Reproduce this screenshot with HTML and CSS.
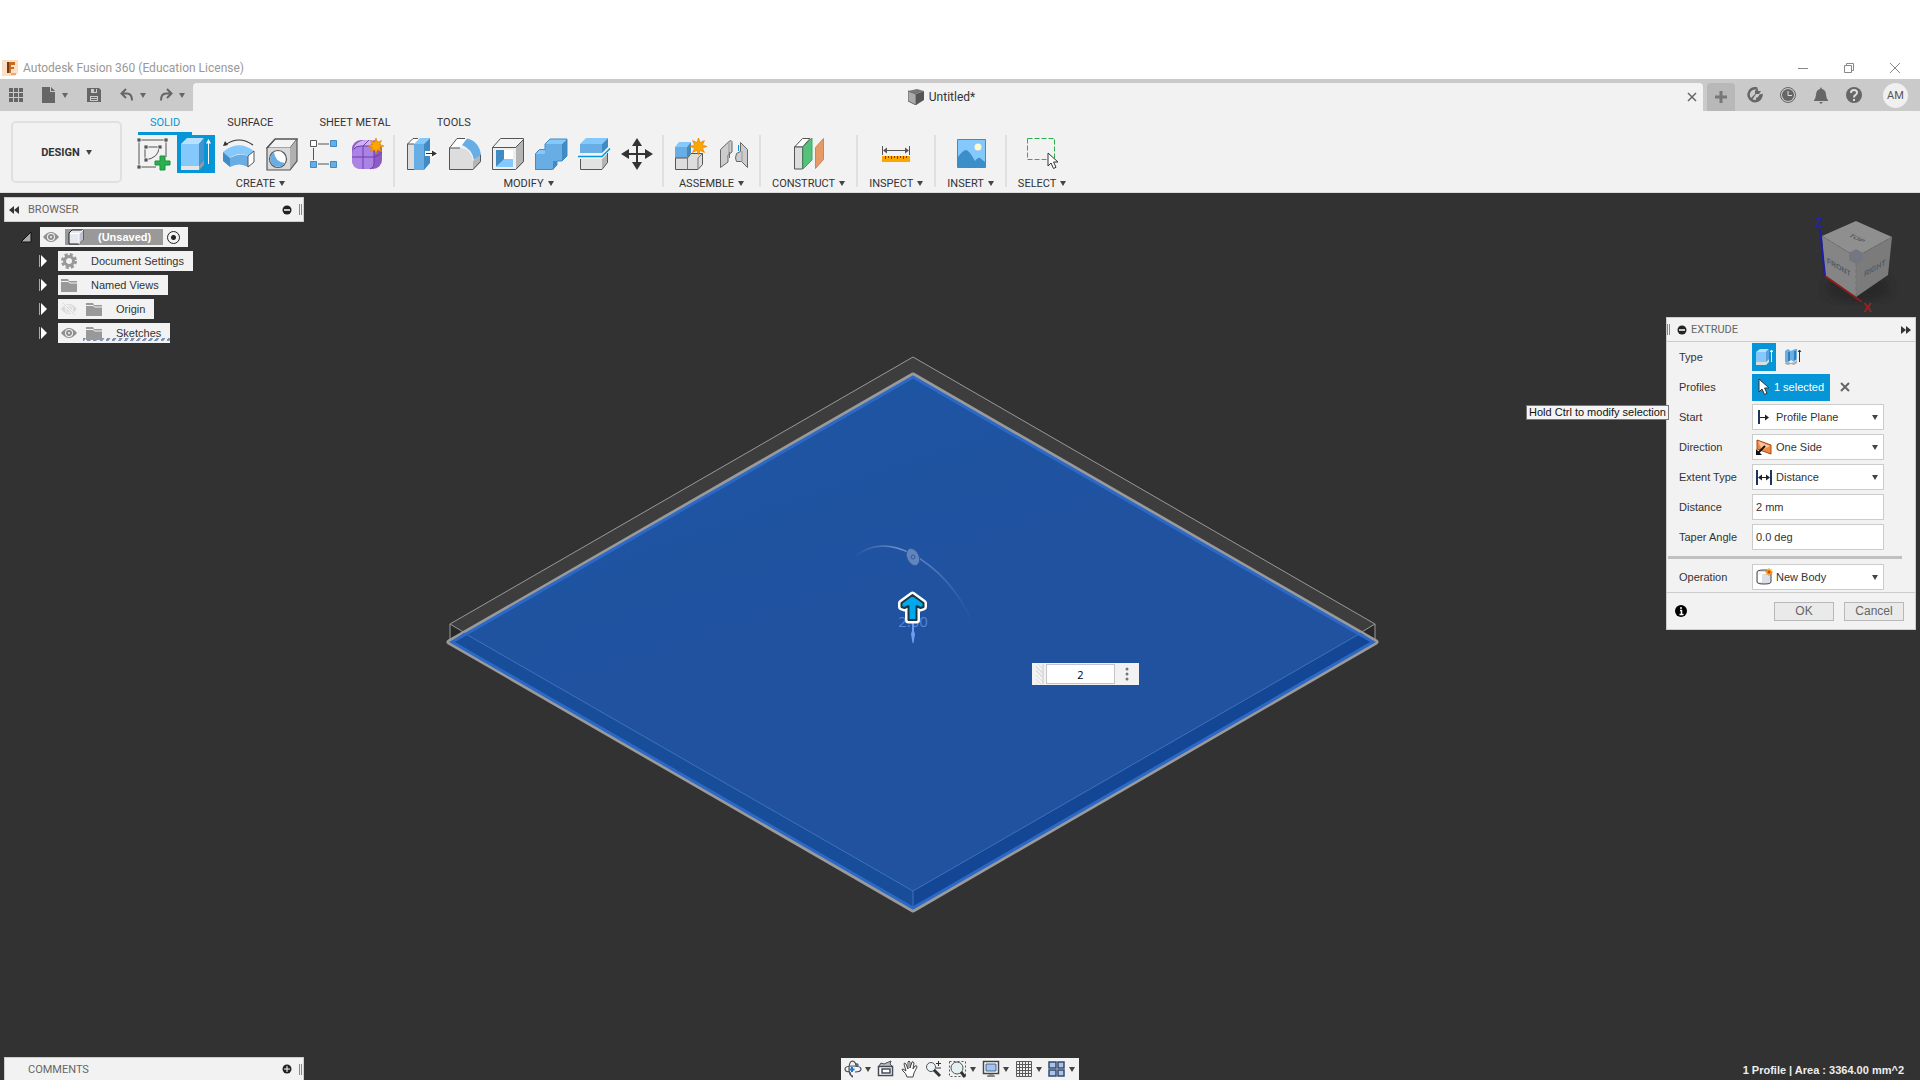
FILE: index.html
```html
<!DOCTYPE html>
<html lang="en">
  <head>
    <meta charset="UTF-8" />
    <meta name="viewport" content="width=device-width, initial-scale=1.0" />
    <title>Autodesk Fusion 360 (Education License)</title>
    <link rel="stylesheet" href="styles.css">
  </head>
  <body>
    <svg class="defs" aria-hidden="true">
      <symbol id="eye" viewBox="0 0 16 16">
        <path d="M0 8 Q4 3 8 3 T16 8 Q12 13 8 13 T0 8Z" fill="#8f8f8f"/>
        <circle cx="8" cy="8" r="4" fill="#f2f2f2"/><circle cx="8" cy="8" r="3" fill="#8f8f8f"/><circle cx="8" cy="8" r="1" fill="#f2f2f2"/>
      </symbol>
      <symbol id="folder" viewBox="0 0 16 16">
        <path d="M0 2h7l1 2h8v11H0z" fill="#999"/><path d="M0 4.500h7l2 1.500h7" fill="none" stroke="#f2f2f2"/>
      </symbol>
      <symbol id="star" viewBox="0 0 16 16">
        <path d="M8 0l1.500 4.300L13.600 2.400 11.700 6.500 16 8l-4.300 1.500 1.900 4.100-4.100-1.900L8 16l-1.500-4.300-4.100 1.900 1.900-4.100L0 8l4.300-1.500L2.400 2.400l4.100 1.900z" fill="#ffa500" stroke="#d98200" stroke-width=".6"/>
      </symbol>
      <symbol id="pointer" viewBox="0 0 12 18">
        <path d="M1 1v13l3-3 2.500 5.500 2.500-1.200L6.600 10H11z" fill="#fff" stroke="#333"/>
      </symbol>
    </svg>

    <header class="title-bar">
      <svg class="logo" width="16" height="16" viewBox="0 0 16 16">
        <path d="M0 0h16v13l-3 3H0z" fill="#fbe0c8"/><path d="M5 2h8v3H9v2h3v2H9v4H5z" fill="#c96a1c"/><path d="M5 2h2v11H5z" fill="#7a3a10"/><path d="M9 13h5v2H9z" fill="#f0a868"/>
      </svg>
      <h1 class="app-name">Autodesk Fusion 360 (Education License)</h1>
      <div class="window-buttons">
        <button aria-label="Minimize"><svg width="12" height="12"><path d="M1 6.500h10" stroke="#888" /></svg></button>
        <button aria-label="Restore"><svg width="12" height="12"><path d="M1.500 3.500h7v7h-7zM3.500 3.500v-2h7v7h-2" fill="none" stroke="#888"/></svg></button>
        <button aria-label="Close"><svg width="12" height="12"><path d="M1 1l10 10M11 1L1 11" stroke="#888"/></svg></button>
      </div>
    </header>

    <div class="document-bar">
      <div class="quick-access">
        <button aria-label="Data panel"><svg width="14" height="14" fill="#666"><path d="M0 0h4v4H0zM5 0h4v4H5zM10 0h4v4h-4zM0 5h4v4H0zM5 5h4v4H5zM10 5h4v4h-4zM0 10h4v4H0zM5 10h4v4H5zM10 10h4v4h-4z"/></svg></button>
        <button class="file" aria-label="File"><svg width="14" height="16" fill="#666"><path d="M0 0h8v5h5v11H0z"/><path d="M9 0l4 4H9z"/></svg><i class="caret"></i></button>
        <button class="save" aria-label="Save"><svg width="14" height="14"><path d="M0 0h12l2 2v12H0z" fill="#666"/><path d="M4 1h6v4H4zM3 8h8v5H3z" fill="#ccc"/><path d="M7 1h2v3H7zM4 9h6v1H4zM4 11h6v1H4z" fill="#666"/></svg></button>
        <button class="undo" aria-label="Undo"><svg width="14" height="14" fill="none" stroke="#666" stroke-width="2"><path d="M6 1L1.500 5.500 6 10M2 5.500h5q5 0 5 7"/></svg><i class="caret"></i></button>
        <button class="redo" aria-label="Redo"><svg width="14" height="14" fill="none" stroke="#666" stroke-width="2"><path d="M8 1l4.500 4.500L8 10M12 5.500H7q-5 0-5 7"/></svg><i class="caret"></i></button>
      </div>
      <div class="document-tab">
        <svg width="16" height="16"><path d="M0 2l9-2 7 2-8 3z" fill="#777"/><path d="M0 2l8 3v11l-8-4z" fill="#aaa" stroke="#666"/><path d="M8 5l8-3v9l-8 5z" fill="#555"/></svg>
        <span class="document-name">Untitled*</span>
        <button class="close-tab" aria-label="Close document"><svg width="10" height="10"><path d="M1 1l8 8M9 1L1 9" stroke="#666" stroke-width="1.500"/></svg></button>
      </div>
      <button class="new-tab" aria-label="New design"><svg width="14" height="14"><path d="M7 1v12M1 7h12" stroke="#777" stroke-width="3"/></svg></button>
      <div class="account">
        <button aria-label="Extensions"><svg width="17" height="17"><path d="M10 1.500A6.500 6.500 0 1 0 14.500 7" fill="none" stroke="#666" stroke-width="2.500"/><path d="M3 12l5-5V4l3-3v3h3l-2 3H9l-4 6z" fill="#666"/><path d="M11 10l2-3 2 2-3 5-3 1v-4z" fill="#666"/></svg></button>
        <button aria-label="Job status"><svg width="17" height="17"><circle cx="8" cy="8" r="7.500" fill="none" stroke="#666"/><circle cx="8" cy="8" r="6" fill="#666"/><path d="M8 4v4.500h4" fill="none" stroke="#ddd"/></svg></button>
        <button aria-label="Notifications"><svg width="17" height="17" fill="#666"><path d="M8 0l1 2q4 1 4 6l1 4 1 1v1H1v-1l1-1 1-4q0-5 4-6zM6 15h4l-2 2z"/></svg></button>
        <button aria-label="Help"><svg width="17" height="17"><circle cx="8" cy="8" r="8" fill="#666"/><path d="M5 6q0-3 3-3t3 2.500Q11 7 9.500 8 8 8.500 8 10.500M8 12v2" fill="none" stroke="#ddd" stroke-width="2"/></svg></button>
      </div>
      <button class="avatar">AM</button>
    </div>

    <div class="ribbon">
      <button class="workspace">DESIGN <i class="caret"></i></button>
      <div class="ribbon-main">
        <nav class="ribbon-tabs">
          <a href="#" class="active">SOLID</a>
          <a href="#">SURFACE</a>
          <a href="#">SHEET METAL</a>
          <a href="#">TOOLS</a>
        </nav>
        <div class="tool-groups">
          <section class="tool-group">
            <div class="tools">
              <button aria-label="Create sketch"><svg width="38" height="38"><path d="M5 5h27v17M5 5v27h17M11 12h14q0 11-14 13z" fill="none" stroke="#555"/><path d="M3 3h4v4H3zM30 3h4v4h-4zM3 30h4v4H3zM10 10h4v4h-4zM24 10h4v4h-4zM10 23h4v4h-4z" fill="#555" stroke="#f2f2f2" stroke-width=".8"/><path d="M26 21h5v5h5v4h-5v5h-5v-5h-5v-4h5z" fill="#2ab04c" stroke="#159338"/></svg></button>
              <button class="selected" aria-label="Extrude"><svg width="38" height="38"><path d="M4 9l6-6h17l-5 6z" fill="#b8e0ff"/><path d="M4 9h18v22H4z" fill="#85c8fc"/><path d="M22 9l5-6v22l-5 6z" fill="#4591cf"/><path d="M4 31h18v4H4z" fill="#e5e5e5"/><path d="M22 31l5-6v5l-5 5z" fill="#999"/><path d="M31.500 29V6" stroke="#fff"/><path d="M29 8.500L31.500 4 34 8.500z" fill="#fff"/></svg></button>
              <button aria-label="Revolve"><svg width="38" height="38"><path d="M5 10Q19 0 33 10" fill="none" stroke="#333" stroke-width="1.200"/><path d="M3 11l2-5 3 4z" fill="#333"/><path d="M3 17Q18 4 34 16l-6 5q-9-5-18 2z" fill="#85c8fc"/><path d="M3 17l7 6v9l-7-6z" fill="#418bc5"/><path d="M10 23q9-6 18-2v11q-9-5-18 0z" fill="#68aee5"/><path d="M28 21l6-5v11l-6 5z" fill="#fff" stroke="#555"/></svg></button>
              <button aria-label="Hole"><svg width="38" height="38" stroke="#555" stroke-width="1.200"><path d="M4 13l8-9h22l-7 9z" fill="#f3f3f3"/><path d="M4 13h23v22H4z" fill="#d9d9d9" stroke="none"/><path d="M27 13l7-9v22l-7 9z" fill="#b0b0b0" stroke="none"/><path d="M4 13l8-9h22v22l-7 9H4z" fill="none"/><circle cx="15" cy="24" r="8.500" fill="#fff"/><path d="M11 17a8 8 0 1 0 11 11Q12 27 11 17z" fill="#68aee5" stroke="none"/></svg></button>
              <button aria-label="Pattern"><svg width="38" height="38"><path d="M12 9h11M7.500 13v12M12 29h11" stroke="#555"/><path d="M4.500 5.500h6v6h-6z" fill="#fff" stroke="#555"/><path d="M24.500 5.500h6v6h-6zM4.500 26.500h6v6h-6zM24.500 26.500h6v6h-6z" fill="#68aee5" stroke="#418bc5"/></svg></button>
              <button aria-label="Create form"><svg width="38" height="38"><rect x="3" y="5" width="30" height="29" rx="9" fill="#8e5bc4"/><path d="M3 20q0-9 8-9h9q5 0 5 6v12q0 5-5 5h-8q-9 0-9-9z" fill="#ab83e4"/><path d="M10 7q3-2 8-2h7l-4 6H11q-5 0-6 3 0-4 5-7z" fill="#cdb2f4"/><path d="M14 11v23M3 22h22q5-1 8-5M14 11l6-6M5 14q2-3 7-3h8q5 0 5 6v12q0 4-4 5" fill="none" stroke="#6e3cad"/><use href="#star" x="19" y="3" width="16" height="16"/></svg></button>
            </div>
            <button class="group-label">CREATE <i class="caret"></i></button>
          </section>
          <section class="tool-group">
            <div class="tools">
              <button aria-label="Press pull"><svg width="38" height="38"><path d="M5 9l6-6h5v32H5z" fill="#fff"/><path d="M5 9h7v26H5z" fill="#ddd"/><path d="M16 3.500h-5L5.500 9v25.500H12M5.500 9H12" fill="none" stroke="#555"/><path d="M12 9l6-6h10l-6 6z" fill="#85c8fc"/><path d="M12 9h10v26H12z" fill="#68aee5"/><path d="M22 9l6-6v25l-6 7z" fill="#418bc5"/><path d="M23 16h7v-3l6 5.500-6 5.500v-3h-7z" fill="#fff"/><path d="M24 18.500h7" stroke="#333"/><path d="M30 15.500l5 3-5 3z" fill="#333"/></svg></button>
              <button aria-label="Fillet"><svg width="38" height="38"><path d="M4 13l8-9h10l-6 7z" fill="#fff"/><path d="M4 13h12q11 2 12 13v9H4z" fill="#ddd"/><path d="M28 26l8-6v7l-8 8z" fill="#b5b5b5"/><path d="M17 10l5-6.500Q34 6 36 20l-7 5Q27 14 17 10z" fill="#68aee5"/><path d="M20 3.500h-8L4.500 13v21.500H28l7.500-8V20M4.500 13H15" fill="none" stroke="#555"/></svg></button>
              <button aria-label="Shell"><svg width="38" height="38"><path d="M4 12l8-8h24l-8 8z" fill="#f3f3f3"/><path d="M4 12h24v23H4z" fill="#eee"/><path d="M28 12l8-8v23l-8 8z" fill="#b5b5b5"/><path d="M8 15h17v17H8z" fill="#fff"/><path d="M8 15h8v10l-8 7z" fill="#418bc5"/><path d="M8 32l8-8h9v8z" fill="#85c8fc"/><path d="M4.500 12.500l8-9h23v23l-8 8h-23zM4.500 12.500H28M28 12l8-8" fill="none" stroke="#555"/></svg></button>
              <button aria-label="Combine"><svg width="38" height="38"><path d="M14 9l5-5h17l-5 5zM4 19l5-5h5v5z" fill="#85c8fc"/><path d="M31 9l5-5v17l-5 5h-5v4l-4 5v-9z" fill="#418bc5"/><path d="M4 19h10V9h17v17h-9v9H4z" fill="#68aee5"/><path d="M4.500 34.500V18.500l4-4h5.500V9l5-5h17v17l-5 5h-5v4l-5 4.500z" fill="none" stroke="#418bc5"/></svg></button>
              <button aria-label="Split body"><svg width="38" height="38"><path d="M6 9l6-6h22l-6 6z" fill="#85c8fc"/><path d="M6 9h22v9H6z" fill="#68aee5"/><path d="M28 9l6-6v9l-6 6z" fill="#418bc5"/><path d="M6 24h22v10H6z" fill="#e2e2e2"/><path d="M28 24l6-6v9l-6 7z" fill="#b5b5b5"/><path d="M6.500 24v10.500H28l5.500-7V18" fill="none" stroke="#555"/><path d="M4 21.500h24l8-8" fill="none" stroke="#0696d7" stroke-width="1.500"/></svg></button>
              <button aria-label="Move"><svg width="38" height="38"><path d="M20 8v22M9 19h22" stroke="#333" stroke-width="2"/><path d="M20 3l5 8H15zM20 35l5-8H15zM4 19l8-5v10zM36 19l-8-5v10z" fill="#333"/></svg></button>
            </div>
            <button class="group-label">MODIFY <i class="caret"></i></button>
          </section>
          <section class="tool-group">
            <div class="tools">
              <button aria-label="New component"><svg width="38" height="38"><path d="M4 12l4-5h12l-4 5z" fill="#85c8fc"/><path d="M4 12h12v11H4z" fill="#68aee5"/><path d="M16 12l4-5v11l-4 5z" fill="#418bc5"/><path d="M4.500 23v11.500H27l4.500-5V18.500H20L16.500 23z" fill="#ddd" stroke="#555"/><path d="M16.500 23v11.500M27 23v11M27 23l4-4" stroke="#777"/><use href="#star" x="19" y="3" width="17" height="17"/></svg></button>
              <button aria-label="Joint"><svg width="38" height="38" stroke="#666"><path d="M6.500 14.500L15 6.500q3-2 3 1V17l-4 3v7l-7.500 5.500z" fill="#ccc"/><path d="M15 8v12" stroke="#999"/><path d="M26.500 7.500l7 7v18l-6-6h-5q-2-3 0-8l4-2z" fill="#ccc"/><path d="M28 16v10" stroke="#999"/><path d="M15.500 17v6M24.500 10v6" stroke="#0696d7"/></svg></button>
            </div>
            <button class="group-label">ASSEMBLE <i class="caret"></i></button>
          </section>
          <section class="tool-group single">
            <div class="tools">
              <button aria-label="Construct plane"><svg width="38" height="38"><path d="M4.500 12l8-8.500H20L12.500 12z" fill="#fff" stroke="#555"/><path d="M4.500 12h8v22h-8z" fill="#ddd" stroke="#555"/><path d="M13 12l9-9v22l-9 9z" fill="#55c27b" stroke="#3fa663"/><path d="M25.500 12.500l8-9v21l-8 9z" fill="#e69a66" stroke="#d08450"/></svg></button>
            </div>
            <button class="group-label">CONSTRUCT <i class="caret"></i></button>
          </section>
          <section class="tool-group single">
            <div class="tools">
              <button aria-label="Measure"><svg width="38" height="38"><path d="M5.500 11v9M32.500 11v9M7 15.500h24" stroke="#555"/><path d="M6 15.500l4-3v6zM32 15.500l-4-3v6z" fill="#555"/><path d="M5 21h28v6H5z" fill="#ffa500"/><path d="M8.500 21v3M11.500 21v2M14.500 21v3M17.500 21v2M20.500 21v3M23.500 21v2M26.500 21v3M29.500 21v2" stroke="#704800"/></svg></button>
            </div>
            <button class="group-label">INSPECT <i class="caret"></i></button>
          </section>
          <section class="tool-group single">
            <div class="tools">
              <button aria-label="Insert canvas"><svg width="38" height="38"><path d="M5.500 4.500h28v28h-28z" fill="#85c8fc" stroke="#418bc5"/><circle cx="26" cy="12" r="3.500" fill="#fff9d0"/><path d="M6 22q5-7 8-7 3 0 9 11 3-4 5-3l5 4v5H6z" fill="#3c8ec8"/></svg></button>
            </div>
            <button class="group-label">INSERT <i class="caret"></i></button>
          </section>
          <section class="tool-group single">
            <div class="tools">
              <button aria-label="Select"><svg width="38" height="38"><path d="M4.500 3.500h27v21h-27z" fill="none" stroke="#2ab04c" stroke-dasharray="5 2"/><use href="#pointer" x="24" y="17" width="12" height="18"/></svg></button>
            </div>
            <button class="group-label">SELECT <i class="caret"></i></button>
          </section>
        </div>
      </div>
    </div>

    <main class="viewport">
      <svg class="model" viewBox="0 0 1920 887">
        <defs>
          <linearGradient id="arc" x1="0" x2="1"><stop offset="0" stop-color="#8aa4d4" stop-opacity="0"/><stop offset=".4" stop-color="#8aa4d4" stop-opacity=".8"/><stop offset="1" stop-color="#8aa4d4" stop-opacity="0"/></linearGradient>
          <linearGradient id="face" x1="0" y1="0" x2=".6" y2="1"><stop offset="0" stop-color="#1c57a3"/><stop offset=".5" stop-color="#2052a0"/><stop offset="1" stop-color="#20529f"/></linearGradient>
        </defs>
        <path d="M450 431L913 164l462 267v18H450z" fill="#3d3d3d"/>
        <path d="M450 431l14 8-14 10zM1375 431l-14 8 14 10z" fill="#292929"/>
        <path d="M450 449v-18L913 164l462 267v18M450 431l20 12M1375 431l-20 12" fill="none" stroke="#999"/>
        <path d="M449 449L913 182l463 267L913 717z" fill="#9a9a9a" stroke="#9a9a9a" stroke-width="5" stroke-linejoin="round"/>
        <path d="M451 449L913 184l461 265L913 715z" fill="url(#face)"/>
        <path d="M451 449l13-9 449 258v17z" fill="#184d99"/>
        <path d="M1374 449l-13-9-448 258v17z" fill="#134694"/>
        <path d="M464 440l449 258 448-258M913 698v17" fill="none" stroke="#3e72bd"/>
        <path d="M452 449L913 184l460 265L913 715z" fill="none" stroke="#2c69c7" stroke-width="3"/>
        <path d="M854 364q24-20 56-4 42 22 63 71" fill="none" stroke="url(#arc)" stroke-width="1.500"/>
        <ellipse cx="913" cy="364" rx="6" ry="9" transform="rotate(-25 913 364)" fill="#6385be" stroke="#34599c"/>
        <circle cx="913" cy="364" r="2" fill="none" stroke="#34599c"/>
        <text class="dimension" x="913" y="434" text-anchor="middle">2.00</text>
        <path d="M912 428h2v10l1 3-1.500 9h-1l-1.500-9 1-3z" fill="#6e9cf0"/>
        <path d="M912.500 402l11 8v4l-3 1-4-2v14h-8v-14l-4 2-3-1v-4z" fill="#00a8ee" stroke="#fff" stroke-width="7" stroke-linejoin="round"/>
        <path d="M912.500 402l11 8v4l-3 1-4-2v14h-8v-14l-4 2-3-1v-4z" fill="#00a8ee" stroke="#1b3742" stroke-width="2" stroke-linejoin="round"/>
      </svg>

      <aside class="browser">
        <div class="panel-bar">
          <svg width="10" height="8"><path d="M5 0v8L0 4zM10 0v8L5 4z" fill="#333"/></svg>
          <h2>BROWSER</h2>
          <button aria-label="Collapse browser"><svg width="10" height="10"><circle cx="5" cy="5" r="4.500" fill="#222"/><path d="M2 5h6" stroke="#fff" stroke-width="1.500"/></svg></button>
          <i class="grip"></i>
        </div>
        <ul class="tree">
          <li class="root">
            <svg width="12" height="12"><path d="M11 1v10H1z" fill="#aaa" stroke="#111"/></svg>
            <span class="node">
              <svg width="16" height="16"><use href="#eye"/></svg>
              <span class="node-name">
                <svg width="16" height="16"><path d="M1 4l3-3h11v10l-4 4H1z" fill="#e6e8f0" stroke="#222"/><path d="M11 5l4-4v10l-4 4z" fill="#bfc3d0"/><path d="M2 4.500h9V15M11 4.500L15 1" fill="none" stroke="#fff"/></svg>
                <b>(Unsaved)</b>
              </span>
              <input type="radio" name="active" aria-label="Activate component" checked>
            </span>
          </li>
          <li>
            <svg width="10" height="12"><path d="M.500 0v12" stroke="#aaa"/><path d="M2 0l6 6-6 6z" fill="#fff"/></svg>
            <span class="node"><svg width="16" height="16"><circle cx="8" cy="8" r="6.500" fill="none" stroke="#999" stroke-width="3" stroke-dasharray="3 2.100"/><circle cx="8" cy="8" r="4.500" fill="none" stroke="#999" stroke-width="3"/></svg><span>Document Settings</span></span>
          </li>
          <li>
            <svg width="10" height="12"><path d="M.500 0v12" stroke="#aaa"/><path d="M2 0l6 6-6 6z" fill="#fff"/></svg>
            <span class="node"><svg width="16" height="16"><use href="#folder"/></svg><span>Named Views</span></span>
          </li>
          <li>
            <svg width="10" height="12"><path d="M.500 0v12" stroke="#aaa"/><path d="M2 0l6 6-6 6z" fill="#fff"/></svg>
            <span class="node"><svg class="hidden-eye" width="16" height="16"><use href="#eye"/><path d="M2 2l12 12" stroke="#f2f2f2" stroke-width="3"/><path d="M2 2l12 12" stroke="#8f8f8f"/></svg><svg width="16" height="16"><use href="#folder"/></svg><span>Origin</span></span>
          </li>
          <li>
            <svg width="10" height="12"><path d="M.500 0v12" stroke="#aaa"/><path d="M2 0l6 6-6 6z" fill="#fff"/></svg>
            <span class="node sketches"><svg width="16" height="16"><use href="#eye"/></svg><svg width="16" height="16"><use href="#folder"/></svg><span>Sketches</span></span>
          </li>
        </ul>
      </aside>

      <svg class="view-cube" width="90" height="106" viewBox="0 0 90 106" role="img" aria-label="View cube">
        <defs><filter id="soft"><feGaussianBlur stdDeviation="5"/></filter></defs>
        <ellipse cx="48" cy="78" rx="32" ry="14" fill="#222" opacity=".6" filter="url(#soft)"/>
        <path d="M46 11l36 16-36 20L12 26z" fill="#8f8f8f"/>
        <path d="M12 26l34 21v40L15 66z" fill="#858585"/>
        <path d="M82 27L46 47v40l32-22z" fill="#7b7b7b"/>
        <path d="M12 26l34 21 36-20M46 47v40" fill="none" stroke="#707070" stroke-dasharray="4 2"/>
        <path d="M39 43l7-4 7 4v7l-7 4-7-4z" fill="#737880"/>
        <g class="cube-label">
          <text transform="matrix(.87 .42 -.7 .42 38 26)">TOP</text>
          <text transform="matrix(.86 .5 .05 1 17 53)">FRONT</text>
          <text transform="matrix(.86 -.5 -.05 1 54 67)">RIGHT</text>
        </g>
        <path d="M10 19l5 47" stroke="#1d1da8" stroke-width="2"/>
        <path d="M15 66l37 26" stroke="#8d1c1c" stroke-width="2"/>
        <text class="axis z" x="5" y="17">Z</text>
        <text class="axis x" x="53" y="102">X</text>
      </svg>

      <div class="value-box">
        <i class="value-grip"></i>
        <input type="text" value="2" aria-label="Distance value">
        <button aria-label="More"><svg width="4" height="14" fill="#777"><circle cx="2" cy="2" r="1.500"/><circle cx="2" cy="7" r="1.500"/><circle cx="2" cy="12" r="1.500"/></svg></button>
      </div>

      <form class="extrude">
        <div class="extrude-head">
          <i class="grip"></i>
          <svg width="10" height="10"><circle cx="5" cy="5" r="4.500" fill="#222"/><path d="M2 5h6" stroke="#fff" stroke-width="1.500"/></svg>
          <h2>EXTRUDE</h2>
          <svg width="10" height="8"><path d="M0 0v8l5-4zM5 0v8l5-4z" fill="#333"/></svg>
        </div>
        <div class="fields">
          <span>Type</span>
          <div class="control">
            <button type="button" class="type selected" aria-label="Extrude"><svg width="18" height="18"><path d="M1 4l4-3h9l-3 3z" fill="#b8e0ff"/><path d="M1 4h10v10H1z" fill="#85c8fc"/><path d="M11 4l3-3v10l-3 3z" fill="#5aa0dc"/><path d="M1 14h10l3-3v3l-3 3H1z" fill="#ddd"/><path d="M16.500 14V2M15 4l1.500-2L18 4" fill="none" stroke="#fff"/></svg></button>
            <button type="button" class="type" aria-label="Thin extrude"><svg width="18" height="18"><path d="M1 3l3-2 3 2 4-2h2v10l-3 3-3-2-4 3-2-1z" fill="#68aee5"/><path d="M5 4v9M11 3v9" stroke="#2f7db9" stroke-width="2"/><path d="M1 15l3-1 3 1 4-1 2-2v3l-3 2-3-1-3 1-3-1z" fill="#aaa"/><path d="M15.500 14V2M14 4l1.500-2L17 4" fill="none" stroke="#333"/></svg></button>
          </div>
          <span>Profiles</span>
          <div class="control">
            <button type="button" class="profile"><svg width="12" height="18"><use href="#pointer"/></svg>1 selected</button>
            <button type="button" class="clear" aria-label="Clear selection"><svg width="10" height="10"><path d="M1 1l8 8M9 1L1 9" stroke="#666" stroke-width="2"/></svg></button>
          </div>
          <label for="start">Start</label>
          <div class="picker">
            <svg width="18" height="18"><path d="M4 2v14" stroke="#1d355e" stroke-width="2"/><path d="M5 9.500h7" stroke="#222"/><path d="M10 6.500l4 3-4 3z" fill="#222"/></svg>
            <select id="start"><option>Profile Plane</option></select><i class="caret"></i>
          </div>
          <label for="direction">Direction</label>
          <div class="picker">
            <svg width="18" height="18"><path d="M2 2l14 5v9L2 11z" fill="#ee8844" stroke="#a34a18"/><path d="M3 3l12 5-8 4z" fill="#ffc398"/><path d="M10 8l-8 8" stroke="#111" stroke-width="2"/><path d="M1 11v6h6z" fill="#111"/></svg>
            <select id="direction"><option>One Side</option></select><i class="caret"></i>
          </div>
          <label for="extent">Extent Type</label>
          <div class="picker">
            <svg width="18" height="18"><path d="M2 2v15M16 2v15" stroke="#1d355e" stroke-width="2"/><path d="M5 9.500h8" stroke="#222"/><path d="M3 9.500l4-3v6zM15 9.500l-4-3v6z" fill="#222"/></svg>
            <select id="extent"><option>Distance</option></select><i class="caret"></i>
          </div>
          <label for="distance">Distance</label>
          <input id="distance" type="text" value="2 mm">
          <label for="taper">Taper Angle</label>
          <input id="taper" type="text" value="0.0 deg">
        </div>
        <hr>
        <div class="fields">
          <label for="operation">Operation</label>
          <div class="picker">
            <svg width="18" height="18"><path d="M2 4q0-2 7-2 7 0 7 2v10q0 2-7 2t-7-2z" fill="#dde0e6" stroke="#444"/><path d="M3 5q6 2 12 0v-1H3zM3 6v8h4V6z" fill="#fff"/><use href="#star" x="10" y="0" width="8" height="8"/><circle cx="14" cy="4" r="1.500" fill="#e33b12"/></svg>
            <select id="operation"><option>New Body</option></select><i class="caret"></i>
          </div>
        </div>
        <div class="extrude-foot">
          <svg width="12" height="12"><circle cx="6" cy="6" r="6" fill="#000"/><path d="M6 2v2M5 5.500h1.500V10M4.500 9.500h4" fill="none" stroke="#fff" stroke-width="1.500"/></svg>
          <button type="button">OK</button>
          <button type="button">Cancel</button>
        </div>
      </form>
      <div class="tooltip" role="tooltip">Hold Ctrl to modify selection</div>

      <div class="comments panel-bar">
        <h2>COMMENTS</h2>
        <button aria-label="Expand comments"><svg width="10" height="10"><circle cx="5" cy="5" r="4.500" fill="#222"/><path d="M2 5h6M5 2v6" stroke="#fff"/></svg></button>
        <i class="grip"></i>
      </div>

      <div class="nav-bar">
        <button aria-label="Orbit"><svg width="18" height="18" fill="none" stroke="#444c58" stroke-width="1.200"><path d="M6 12Q1 12 1 9t8-3q8 0 8 3t-6 3M6 12q1 5 3 5M12 5Q11 1 8 1 5 2 5 9t4 7"/><path d="M8 7v5M5.500 9.500h5" stroke="#1b79d0" stroke-width="2"/><path d="M13 3v4M11 5h4"/></svg><i class="caret"></i></button>
        <button aria-label="Look at"><svg width="18" height="18" fill="#fff" stroke="#444c58" stroke-width="1.500"><path d="M2 6l2-3 3 1 7-3-1 3 2 2" fill="#bbb" stroke-width="1"/><path d="M1.500 6.500h14v9h-14zM5 9h8v4H5z"/></svg></button>
        <button aria-label="Pan"><svg width="18" height="18"><path d="M6 17q-1-4-4-6-2-2 0-2l3 2-2-7q0-2 2 0l2 5V2q1-2 2 0v6l2-6q1-1 2 1l-1 6 2-3q2-1 2 1l-3 6-1 4z" fill="#fff" stroke="#444"/></svg></button>
        <button class="zoom" aria-label="Zoom"><svg width="18" height="18"><circle cx="6" cy="7" r="4.500" fill="#eaf3f6" stroke="#555"/><path d="M9 10l6 6" stroke="#333" stroke-width="3"/><path d="M13.500 1v5M11 3.500h5M11 8h5" stroke="#333"/></svg></button>
        <button class="fit" aria-label="Fit"><svg width="18" height="18"><path d="M.5 1.500h16v15H.5z" fill="none" stroke="#555" stroke-dasharray="2 2"/><circle cx="8" cy="8" r="6" fill="#e2f1f0" stroke="#555"/><path d="M12 12l4 5" stroke="#333" stroke-width="3"/></svg><i class="caret"></i></button>
        <button aria-label="Display settings"><svg width="18" height="18"><path d="M1.500 1.500h15v12h-15z" fill="#fff" stroke="#444" stroke-width="1.500"/><path d="M4 4h10v7H4z" fill="#a8c4ea" stroke="#3f6296"/><path d="M5 17q0-3 4-3t4 3z" fill="#888"/></svg><i class="caret"></i></button>
        <button aria-label="Grid"><svg width="18" height="18"><path d="M1.500 1.500h15v15h-15zM4.500 1v16M7.500 1v16M10.500 1v16M13.500 1v16M1 4.500h16M1 7.500h16M1 10.500h16M1 13.500h16" fill="none" stroke="#5a5a5a"/></svg><i class="caret"></i></button>
        <button aria-label="Viewports"><svg width="18" height="18"><path d="M1 2h7v6H1zM10 2h6v6h-6zM1 10h7v6H1zM10 10h6v6h-6z" fill="#a8c4ea" stroke="#34496e" stroke-width="1.500"/></svg><i class="caret"></i></button>
      </div>

      <p class="status">1 Profile | Area : 3364.00 mm^2</p>
    </main>
  </body>
</html>
```
FILE: styles.css
```css
* {
  box-sizing: border-box;
}
body {
  display: flex;
  flex-direction: column;
  height: 100vh;
  margin: 0;
  overflow: hidden;
  background: #fff;
  color: #333;
  font-family: "Liberation Sans", Arial, sans-serif;
  font-size: 11px;
}
button {
  display: flex;
  align-items: center;
  justify-content: center;
  padding: 0;
  border: none;
  background: none;
  color: inherit;
  font: inherit;
}
h1, h2, p, ul {
  margin: 0;
  padding: 0;
  font-weight: normal;
}
svg {
  display: block;
  flex: none;
}
.defs {
  position: absolute;
  width: 0;
  height: 0;
}
.caret {
  border: 3px solid transparent;
  border-top: 5px solid #444;
  border-bottom: 0;
}

/* title bar */
.title-bar {
  display: flex;
  align-items: center;
  gap: 5px;
  padding: 56px 16px 0 2px;
  height: 79px;
  flex: none;
}
.app-name {
  flex: 1;
  font-family: Roboto, sans-serif;
  font-size: 12px;
  color: #999;
}
.window-buttons {
  display: flex;
  gap: 34px;
  padding-right: 3px;
}

/* document tabs */
.document-bar {
  display: flex;
  align-items: flex-end;
  height: 32px;
  flex: none;
  background: #cacaca;
}
.quick-access {
  display: flex;
  align-items: center;
  width: 193px;
  height: 32px;
  padding-left: 9px;
}
.quick-access button {
  gap: 6px;
}
.quick-access .file {
  margin-left: 19px;
}
.quick-access .save {
  margin-left: 19px;
}
.quick-access .undo {
  margin-left: 19px;
}
.quick-access .redo {
  margin-left: 13px;
}
.quick-access .caret {
  border-top-color: #666;
}
.document-tab {
  display: flex;
  align-items: center;
  justify-content: center;
  flex: 1;
  gap: 5px;
  height: 28px;
  padding-right: 13px;
  position: relative;
  border-radius: 4px 4px 0 0;
  background: #f2f2f2;
}
.document-name {
  font-family: Roboto, sans-serif;
  font-size: 12px;
}
.close-tab {
  position: absolute;
  right: 6px;
}
.new-tab {
  width: 28px;
  height: 28px;
  margin-left: 4px;
  border-radius: 4px 4px 0 0;
  background: #b8b8b8;
}
.account {
  display: flex;
  align-items: center;
  gap: 16px;
  height: 32px;
  padding: 0 20px 0 12px;
}
.avatar {
  width: 25px;
  height: 25px;
  margin: 0 12px 3px 0;
  border-radius: 50%;
  background: #f0f0f0;
  color: #555;
  font-family: Roboto, sans-serif;
}

/* ribbon */
.ribbon {
  display: flex;
  flex: none;
  height: 82px;
  padding-left: 11px;
  border-bottom: 1px solid #ddd;
  background: #f2f2f2;
  font-family: Roboto, sans-serif;
}
.workspace {
  gap: 6px;
  width: 111px;
  height: 62px;
  margin-top: 10px;
  border: 2px solid #e0e0e0;
  border-radius: 5px;
  font-weight: bold;
}
.ribbon-main {
  padding-left: 5px;
}
.ribbon-tabs {
  display: flex;
  height: 24px;
}
.ribbon-tabs a {
  padding: 5px 23px 0;
  border-bottom: 3px solid transparent;
  color: #333;
  line-height: 13px;
  text-decoration: none;
}
.ribbon-tabs .active {
  margin: 0 12px 0 11px;
  padding: 5px 12px 0;
  border-color: #0696d7;
  color: #0696d7;
}
.tool-groups {
  display: flex;
}
.tool-group {
  display: flex;
  flex-direction: column;
  align-items: center;
  height: 52px;
  padding: 0 7px;
  border-right: 2px solid #e0e0e0;
}
.tool-group:first-child {
  padding-right: 6px;
}
.tool-group:last-child {
  border: none;
}
.tool-group.single {
  padding: 0 11px;
}
.tools {
  display: flex;
  flex: none;
  gap: 5px;
}
.tools .selected {
  background: #0696d7;
}
.group-label {
  flex: none;
  gap: 4px;
  height: 20px;
}

/* viewport */
.viewport {
  position: relative;
  flex: 1;
  min-height: 0;
  overflow: hidden;
  background: #323232;
}
.model {
  width: 100%;
  height: 100%;
}
.dimension {
  fill: #5585d8;
  font-family: "Open Sans", sans-serif;
  font-size: 15px;
}
.panel-bar {
  display: flex;
  align-items: center;
  gap: 9px;
  width: 300px;
  height: 25px;
  padding: 0 1px 0 4px;
  border: 1px solid #ccc;
  background: #f2f2f2;
}
.panel-bar h2 {
  flex: 1;
}
h2 {
  color: #666;
  font-family: Roboto, sans-serif;
  font-size: 11px;
}
.panel-bar .grip {
  margin-left: -2px;
}
.grip {
  width: 3px;
  height: 11px;
  border: solid #888;
  border-width: 0 1px;
}
.browser {
  position: absolute;
  top: 4px;
  left: 4px;
}
.tree {
  display: flex;
  flex-direction: column;
  gap: 4px;
  padding-top: 5px;
  list-style: none;
}
.tree li {
  display: flex;
  align-items: center;
  gap: 9px;
  height: 20px;
  padding-left: 35px;
}
.tree .root {
  gap: 8px;
  padding-left: 16px;
}
.node {
  display: flex;
  align-items: center;
  gap: 9px;
  height: 20px;
  padding: 0 9px 0 3px;
  background: #f2f2f2;
}
.node > span:last-child {
  padding-left: 5px;
}
.root .node {
  gap: 6px;
  padding-right: 8px;
}
.node-name {
  display: flex;
  align-items: center;
  gap: 14px;
  width: 98px;
  height: 16px;
  padding-left: 3px;
  background: #999;
  color: #fff;
}
.root input {
  appearance: none;
  width: 13px;
  height: 13px;
  margin: 0 0 0 -2px;
  border: 1px solid #222;
  border-radius: 50%;
  background: radial-gradient(#222 2px, transparent 3px);
}
.hidden-eye {
  opacity: .25;
}
.sketches {
  background: repeating-linear-gradient(125deg, #7d91b5 0 2px, #f2f2f2 3px 5px) 25px 15px / 88px 3px no-repeat #f2f2f2;
}
.view-cube {
  position: absolute;
  top: 17px;
  right: 20px;
}
.cube-label {
  fill: #555b63;
  font-size: 8px;
  font-weight: bold;
}
.axis {
  font-size: 13px;
  font-weight: bold;
}
.axis.z {
  fill: #2424a0;
}
.axis.x {
  fill: #9b2222;
}
.value-box {
  display: flex;
  align-items: center;
  position: absolute;
  top: 470px;
  left: calc(50% + 72px);
  width: 107px;
  height: 22px;
  background: #f2f2f2;
}
.value-grip {
  width: 8px;
  height: 20px;
  margin: 0 2px 0 4px;
  border-right: 2px solid #ddd;
  background: repeating-linear-gradient(45deg, #ddd 0 1px, #f2f2f2 1px 3px);
}
.value-box input {
  width: 69px;
  height: 20px;
  padding: 0;
  border: 1px solid #c4c4cc;
  font: 11px "Open Sans", sans-serif;
  text-align: center;
}
.value-box button {
  flex: 1;
}

/* extrude dialog */
.extrude {
  position: absolute;
  top: 124px;
  right: 4px;
  width: 250px;
  border: 1px solid #ccc;
  background: #f2f2f2;
}
.extrude-head {
  display: flex;
  align-items: center;
  gap: 4px;
  height: 24px;
  padding-right: 4px;
  border-bottom: 1px solid #ccc;
}
.extrude-head .grip {
  margin-right: 3px;
}
.extrude-head h2 {
  flex: 1;
}
.fields {
  display: grid;
  grid-template-columns: 73px 132px;
  grid-auto-rows: 30px;
  align-items: center;
  padding-left: 12px;
}
.fields input,
.picker {
  width: 132px;
  height: 26px;
  border: 1px solid #ccc;
  background: #fff;
}
.fields input {
  padding: 0 3px;
  color: #333;
  font: inherit;
}
.picker {
  display: flex;
  align-items: center;
  padding: 0 5px 0 2px;
}
.picker select {
  flex: 1;
  margin-left: 3px;
  padding: 0;
  appearance: none;
  border: none;
  background: none;
  color: #333;
  font: inherit;
}
.control {
  display: flex;
  align-items: center;
}
.type {
  width: 24px;
  height: 28px;
  margin-right: 5px;
}
.type.selected,
.profile {
  background: #0696d7;
}
.profile {
  gap: 4px;
  width: 78px;
  height: 27px;
  color: #fff;
}
.clear {
  margin-left: 10px;
}
.extrude hr {
  height: 3px;
  margin: 4px 13px 3px 1px;
  border: none;
  background: #c0c0c0;
}
.extrude-foot {
  display: flex;
  align-items: center;
  gap: 10px;
  height: 37px;
  padding: 0 11px 0 8px;
  border-top: 1px solid #ccc;
}
.extrude-foot svg {
  margin-right: auto;
}
.extrude-foot button {
  width: 60px;
  height: 19px;
  border: 1px solid #b8b8b8;
  background: #eaeaea;
  color: #666;
  font-size: 12px;
}
.tooltip {
  position: absolute;
  top: 212px;
  right: 251px;
  padding: 0 2px;
  border: 1px solid #777;
  background: #f4f4f4;
  color: #111;
  line-height: 13px;
}

/* bottom bars */
.comments {
  position: absolute;
  bottom: 0;
  left: 4px;
  height: 23px;
  padding-left: 23px;
  border-bottom: none;
}
.nav-bar {
  display: flex;
  align-items: center;
  gap: 6px;
  position: absolute;
  bottom: 0;
  left: 841px;
  height: 22px;
  padding: 0 4px 0 3px;
  background: #f2f2f2;
}
.nav-bar button {
  gap: 3px;
}
.status {
  position: absolute;
  right: 16px;
  bottom: 4px;
  color: #eee;
  font-size: 11px;
  font-weight: bold;
}
```
